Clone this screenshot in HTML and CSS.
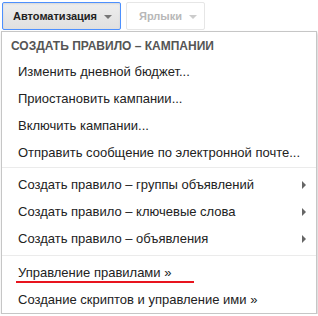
FILE: index.html
```html
<!DOCTYPE html>
<html>
<head>
    <title>Автоматизация</title>
    <link rel="stylesheet" href="styles.css">
</head>
<body>
    <div class="toolbar">
        <div class="btn btn-active">Автоматизация <span class="caret"></span></div>
        <div class="btn btn-disabled">Ярлыки <span class="caret"></span></div>
    </div>
    <div class="menu">
        <div class="menu-header">Создать правило – кампании</div>
        <div class="menu-item">Изменить дневной бюджет...</div>
        <div class="menu-item">Приостановить кампании...</div>
        <div class="menu-item">Включить кампании...</div>
        <div class="menu-item">Отправить сообщение по электронной почте...</div>
        <div class="menu-sep"></div>
        <div class="menu-item has-sub">Создать правило – группы объявлений</div>
        <div class="menu-item has-sub">Создать правило – ключевые слова</div>
        <div class="menu-item has-sub">Создать правило – объявления</div>
        <div class="menu-sep"></div>
        <div class="menu-item marked">Управление правилами »</div>
        <div class="menu-item">Создание скриптов и управление ими »</div>
    </div>
</body>
</html>
```
FILE: styles.css
```css
body {
    margin: 0;
    background: #fff;
    font-family: "Liberation Sans", Arial, sans-serif;
}

.toolbar {
    display: flex;
    gap: 5px;
    padding: 2px 0 0 2px;
}

.btn {
    box-sizing: border-box;
    height: 28px;
    line-height: 26px;
    font-size: 11px;
    font-weight: bold;
    border-radius: 2px;
    white-space: nowrap;
}

.btn-active {
    width: 119px;
    padding-left: 10px;
    color: #222;
    border: 1px solid #4d90fe;
    background: linear-gradient(#eeeeee, #e0e0e0);
    box-shadow: inset 0 1px 2px rgba(0, 0, 0, 0.1);
}

.btn-disabled {
    width: 79px;
    padding-left: 12px;
    color: #b8b8b8;
    border: 1px solid #e6e6e6;
    background: #fff;
}

.caret {
    display: inline-block;
    margin-left: 4px;
    vertical-align: middle;
    border-top: 4px solid #777;
    border-left: 4px solid transparent;
    border-right: 4px solid transparent;
}

.btn-disabled .caret {
    border-top-color: #ccc;
}

.menu {
    box-sizing: border-box;
    width: 316px;
    margin: 1px 0 0 1px;
    padding-top: 4px;
    background: #fff;
    border: 1px solid #c6c6c6;
    box-shadow: 1px 2px 3px rgba(0, 0, 0, 0.2);
    font-size: 13px;
}

.menu-header {
    line-height: 20px;
    margin-bottom: 2px;
    padding-left: 9px;
    font-size: 12px;
    font-weight: bold;
    color: #555;
    text-transform: uppercase;
}

.menu-item {
    position: relative;
    height: 27px;
    line-height: 27px;
    padding-left: 16px;
    color: #222;
    white-space: nowrap;
}

.menu-item.has-sub::after {
    content: "";
    position: absolute;
    right: 10px;
    top: 10px;
    border-left: 4px solid #666;
    border-top: 4px solid transparent;
    border-bottom: 4px solid transparent;
}

.menu-item.marked::after {
    content: "";
    position: absolute;
    left: 14px;
    top: 22px;
    width: 178px;
    height: 2px;
    background: #e8141e;
}

.menu-sep {
    height: 1px;
    margin: 1px 0 3px;
    background: #ebebeb;
}

.has-sub + .menu-sep {
    margin-top: 3px;
}
```
